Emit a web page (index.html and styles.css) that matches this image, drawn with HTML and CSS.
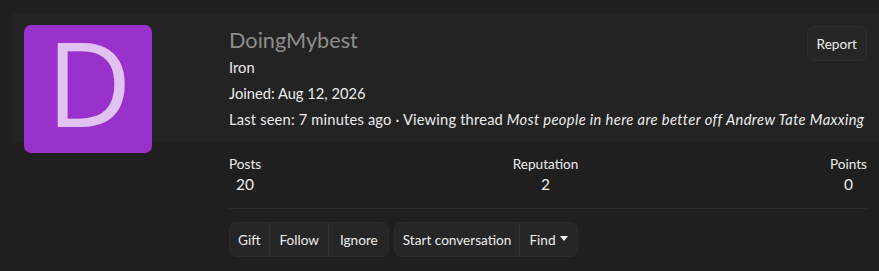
FILE: index.html
```html
<!DOCTYPE html>
<html>
<head>
<meta charset="utf-8">
<link rel="stylesheet" href="styles.css">
</head>
<body>
<div class="page">
  <div class="header">
    <div class="avatar"><span>D</span></div>
    <div class="info">
      <div class="name">DoingMybest</div>
      <div class="line">Iron</div>
      <div class="line">Joined: Aug 12, 2026</div>
      <div class="line"><span class="seen">Last seen: 7 minutes ago · Viewing thread</span> <em>Most people in here are better off Andrew Tate Maxxing</em></div>
    </div>
    <div class="report">Report</div>
  </div>
  <div class="body">
    <div class="stats">
      <div class="stat first"><div class="lbl">Posts</div><div class="val">20</div></div>
      <div class="stat"><div class="lbl">Reputation</div><div class="val">2</div></div>
      <div class="stat last"><div class="lbl">Points</div><div class="val">0</div></div>
    </div>
    <div class="divider"></div>
    <div class="actions">
      <div class="group">
        <div class="btn">Gift</div>
        <div class="btn">Follow</div>
        <div class="btn wide">Ignore</div>
      </div>
      <div class="group">
        <div class="btn narrow">Start conversation</div>
        <div class="btn">Find <span class="caret"></span></div>
      </div>
    </div>
  </div>
</div>
</body>
</html>
```
FILE: styles.css
```css
html, body {
  margin: 0;
  padding: 0;
  background: #1f1f1f;
  color: #ececec;
  font-family: "Lato", "Open Sans", sans-serif;
  font-size: 14.7px;
  overflow: hidden;
}
.page {
  padding-top: 13px;
}
.header {
  position: relative;
  margin-left: 12px;
  height: 130px;
  background: #232323;
  display: flex;
  align-items: flex-start;
  padding: 12px 12px 0 12px;
  box-sizing: border-box;
}
.avatar {
  width: 128px;
  height: 128px;
  flex: none;
  background: #9932cc;
  border-radius: 7px;
  display: flex;
  align-items: center;
  justify-content: center;
  margin-right: 77px;
}
.avatar span {
  color: #e1c2f1;
  font-family: "Open Sans", sans-serif;
  font-size: 118px;
  line-height: 100px;
  margin-top: -14px;
  margin-left: 2px;
}
.info {
  flex: 1;
  padding-top: 2px;
  white-space: nowrap;
}
.name {
  font-size: 21.7px;
  color: #8d8d8d;
  line-height: 26px;
  margin-bottom: 1px;
}
.line {
  line-height: 26px;
}
.seen {
  letter-spacing: 0.18px;
}
.line em {
  font-style: italic;
  letter-spacing: 0.38px;
}
.report {
  position: absolute;
  top: 13px;
  right: 12px;
  height: 35px;
  padding: 0 9px;
  display: flex;
  align-items: center;
  background: #262626;
  border: 1px solid #2c2c2c;
  border-radius: 7px;
  font-size: 13.6px;
  box-sizing: border-box;
}
.body {
  margin-left: 229px;
  margin-right: 12px;
  padding-top: 12px;
}
.stats {
  display: flex;
  justify-content: space-between;
}
.stat {
  text-align: center;
}
.lbl {
  font-size: 13.6px;
  line-height: 18px;
}
.val {
  font-size: 15.5px;
  line-height: 22px;
}
.divider {
  height: 1px;
  background: #2b2b2b;
  margin-top: 13px;
  margin-bottom: 13px;
}
.actions {
  display: flex;
  gap: 5px;
}
.group {
  display: flex;
  background: #262626;
  border: 1px solid #2b2b2b;
  border-radius: 7px;
  height: 35px;
  box-sizing: border-box;
}
.btn {
  display: flex;
  align-items: center;
  padding: 0 9px;
  font-size: 13.6px;
  border-left: 1px solid #333;
}
.btn:first-child {
  border-left: none;
  padding-left: 8px;
}
.btn.wide {
  padding: 0 10px 0 11px;
}
.btn.narrow {
  padding: 0 8px;
}
.caret {
  display: inline-block;
  width: 0;
  height: 0;
  border-left: 4px solid transparent;
  border-right: 4px solid transparent;
  border-top: 5px solid #ececec;
  margin-left: 4px;
  margin-top: -3px;
}
```
